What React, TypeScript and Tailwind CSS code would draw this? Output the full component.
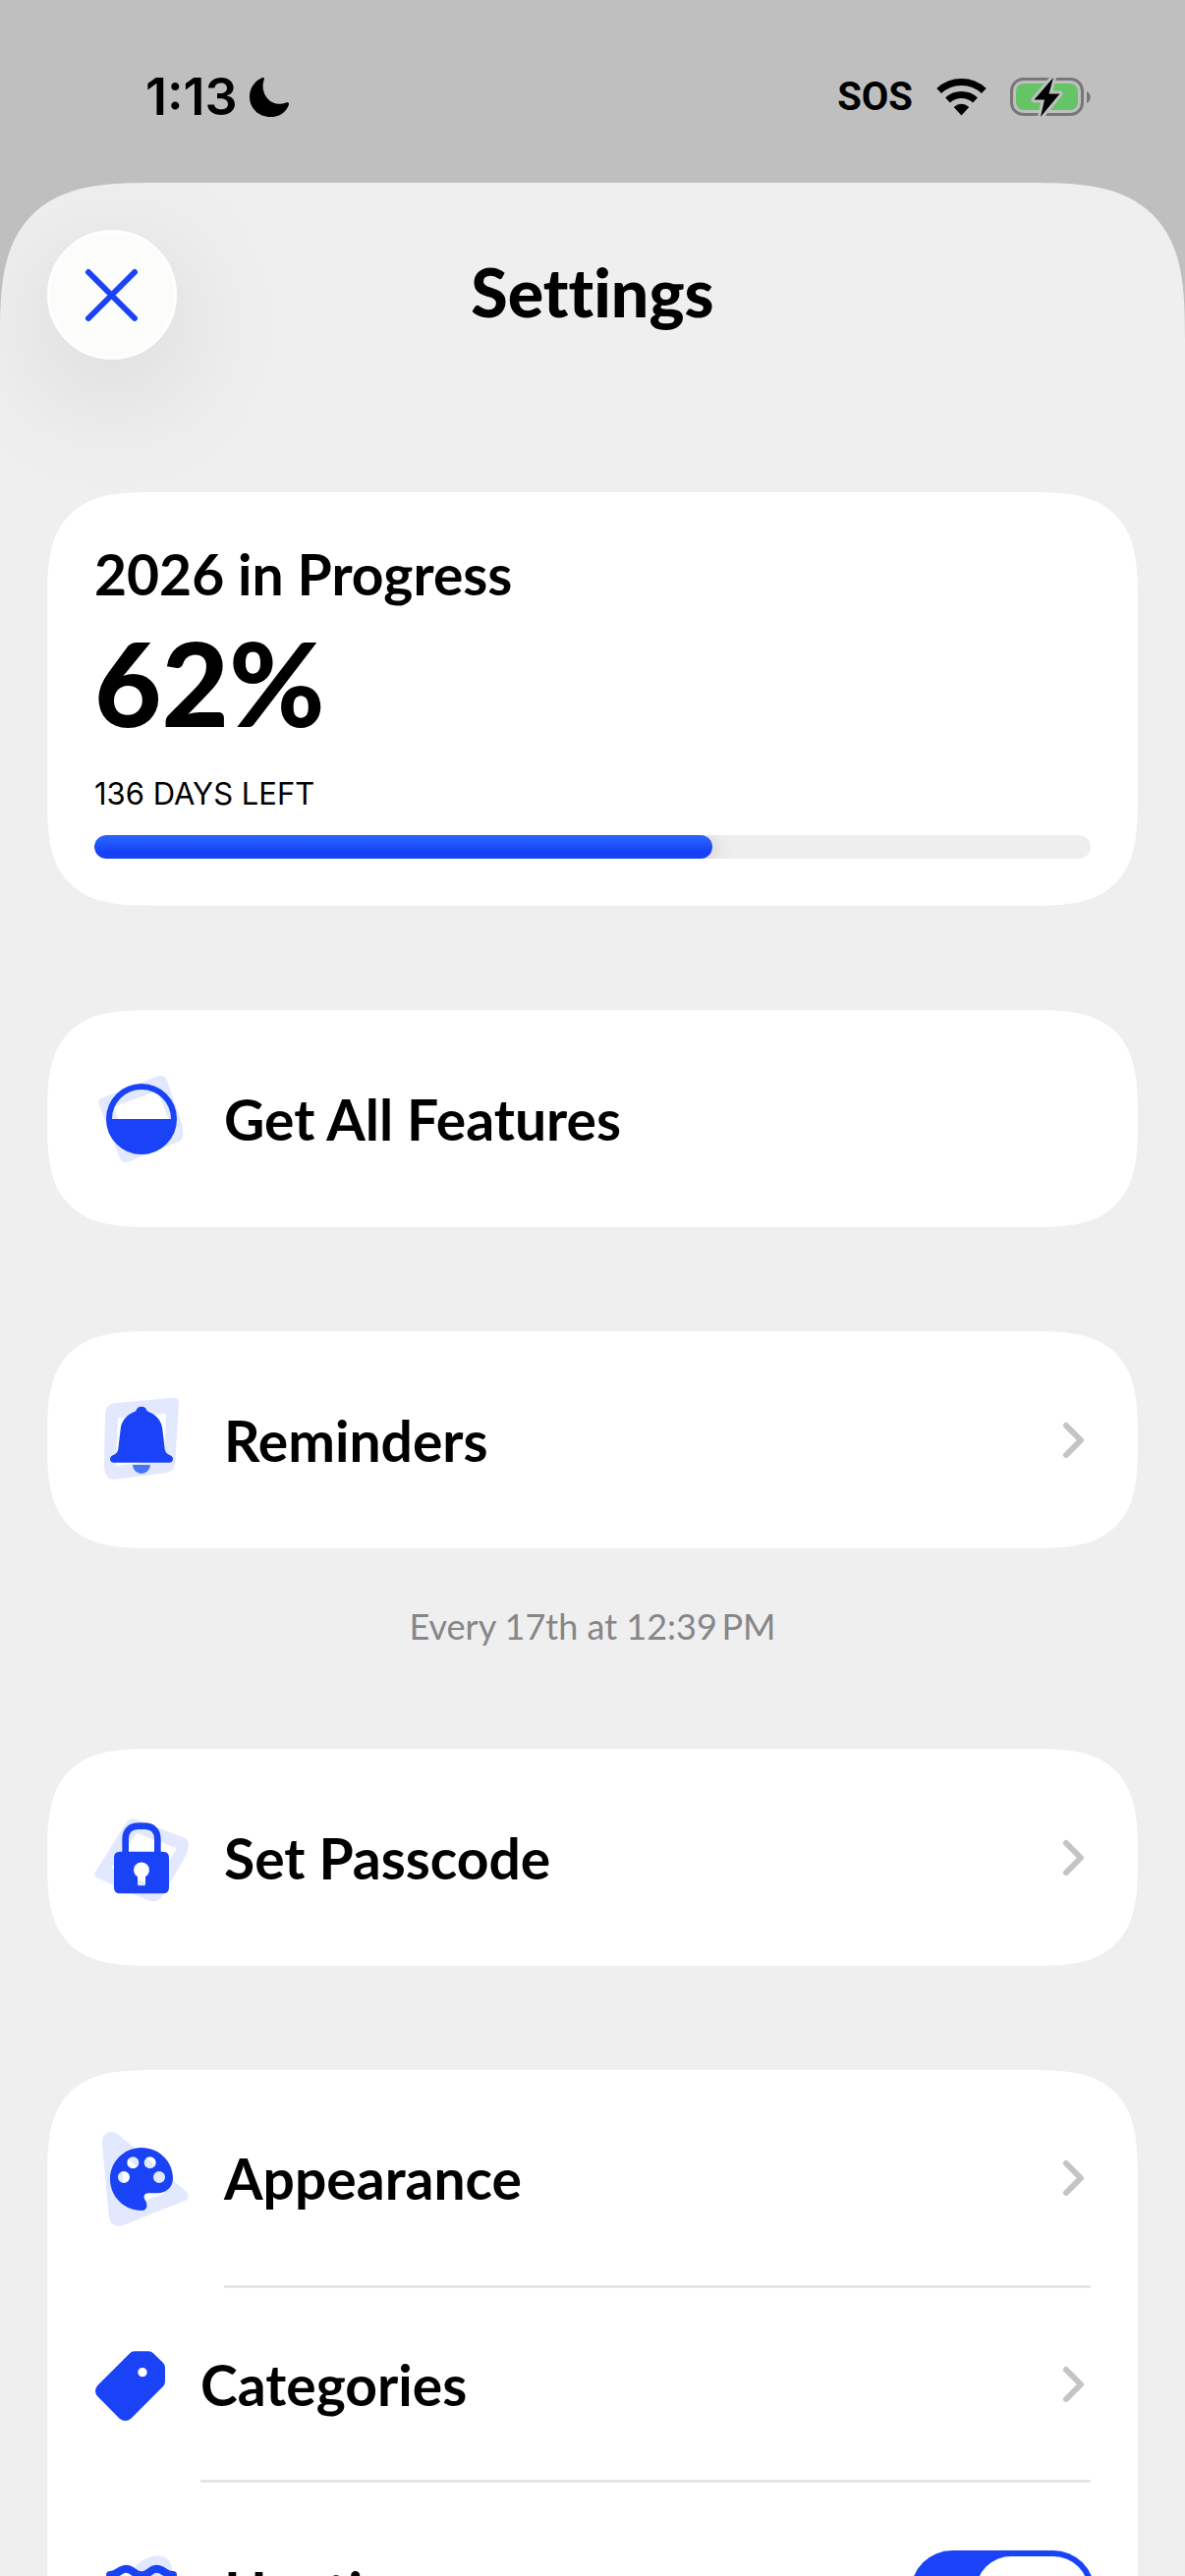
import { useState, type ReactNode } from 'react'

const YEAR_PROGRESS = 62

function MoonIcon() {
    return (
        <svg viewBox="0 0 40 40" className="size-10" aria-hidden="true">
            <path d="M14.6 2.5 C12.5 8 13.5 16 18 21 C22 26 30 28.5 37 25.6 C39.6 24.6 40.6 26 39.6 28.4 C36.5 36 29.5 40 21.3 40 C9 40 0 31 0 19.5 C0 11 5 3.8 12 .6 C14.5 -.5 15.5 .3 14.6 2.5Z" />
        </svg>
    )
}

function WifiIcon() {
    return (
        <svg viewBox="0 0 51 38" className="h-[38px] w-[51px]" aria-hidden="true">
            <path d="M2.7 12.5 A33.5 33.5 0 0 1 48.3 12.5 M11.5 22 A20.5 20.5 0 0 1 39.5 22" fill="none" stroke="black" strokeWidth="7" />
            <path d="M25.5 37.5 L17.7 29 Q25.5 22.5 33.3 29Z" />
        </svg>
    )
}

function BatteryIcon() {
    return (
        <svg viewBox="0 0 82 42" className="h-[42px] w-[82px]" aria-hidden="true">
            <rect x="1.5" y="2.5" width="72" height="36" rx="12" fill="none" stroke="#777777" strokeWidth="3" />
            <rect x="6" y="7" width="63" height="27" rx="8" fill="#65c466" />
            <path d="M78 15 C83 17 83 25 78 27Z" fill="#777777" />
            <path d="M44 1 L24.5 23.5 H35 L31 41 L50.5 17.5 H39.5Z" fill="black" stroke="#bfbfbf" strokeWidth="6" strokeLinejoin="round" paintOrder="stroke" />
        </svg>
    )
}

function FeaturesIcon() {
    return (
        <svg viewBox="48 60 288 288" className="size-24" aria-hidden="true">
            <path
                fillRule="evenodd"
                fill="#e2e8fd"
                d="M70 140 L242 73 Q262 66 270 86 L318 228 Q324 266 304 274 L150 335 Q134 340 126 324 L61 156 Q58 145 70 140Z M106 167 L242 118 L284 232 L150 280Z"
            />
            <circle cx="192" cy="204" r="99" fill="none" stroke="#1a43f8" strokeWidth="18" />
            <path d="M86 204 H298 A106 106 0 0 1 86 204Z" fill="#1a43f8" />
        </svg>
    )
}

function BellIcon() {
    return (
        <svg viewBox="48 52 288 288" className="size-24" aria-hidden="true">
            <path
                fillRule="evenodd"
                fill="#e2e8fd"
                d="M108 83 L292 66 Q306 65 306 80 L295 262 Q293 292 270 295 L108 315 Q80 315 78 275 L81 115 Q84 87 108 83Z M120 128 L267 114 L261 258 L113 274Z"
            />
            <path
                d="M192 93 C202 93 207 99 209 107 C236 117 254 137 256 162 L263 222 Q265 236 278 241 Q288 245 288 253 Q288 264 276 264 H108 Q96 264 96 253 Q96 245 106 241 Q119 236 121 222 L128 162 C130 137 148 117 175 107 C177 99 182 93 192 93Z"
                fill="#1a43f8"
            />
            <path d="M165 271 H219 A27 27 0 0 1 165 271Z" fill="#4b75f9" />
        </svg>
    )
}

function LockIcon() {
    return (
        <svg viewBox="48 38 288 288" className="size-24" aria-hidden="true">
            <path
                fillRule="evenodd"
                fill="#e2e8fd"
                d="M178 65 L325 122 Q340 130 334 156 Q330 174 320 188 L253 303 Q240 320 215 313 L55 243 Q44 236 52 224 L144 76 Q156 58 178 65Z M178 107 L300 153 L230 268 L99 213Z"
            />
            <path d="M143 168 V125 C143 98 160 85 182 85 H202 C224 85 241 98 241 125 V168" fill="none" stroke="#1a43f8" strokeWidth="20" />
            <path
                fillRule="evenodd"
                fill="#1a43f8"
                d="M126 163 H258 Q276 163 276 181 V273 Q276 291 258 291 H126 Q108 291 108 273 V181 Q108 163 126 163Z M180 240 V262 Q180 267 185 267 H199 Q204 267 204 262 V240 A24 24 0 1 0 180 240Z"
            />
        </svg>
    )
}

function PaletteIcon() {
    return (
        <svg viewBox="48 60 288 288" className="size-24" aria-hidden="true">
            <path
                fillRule="evenodd"
                fill="#e2e8fd"
                d="M72 96 C72 60 98 50 124 70 L322 236 Q346 256 326 269 L136 345 C110 353 94 338 92 314Z M130 122 L264 248 L140 292Z"
            />
            <path
                fillRule="evenodd"
                fill="#1a43f8"
                d="M192 108 C246 108 288 150 288 202 C288 228 268 247 240 247 H214 C201 247 196 257 203 268 C212 283 210 300 192 300 C139 300 96 257 96 204 C96 151 139 108 192 108Z M156 198 A18 18 0 1 0 120 198 A18 18 0 1 0 156 198Z M184 154 A18 18 0 1 0 148 154 A18 18 0 1 0 184 154Z M236 154 A18 18 0 1 0 200 154 A18 18 0 1 0 236 154Z M264 198 A18 18 0 1 0 228 198 A18 18 0 1 0 264 198Z"
            />
        </svg>
    )
}

function TagIcon() {
    return (
        <svg viewBox="48 62 216 216" className="size-18" aria-hidden="true">
            <path
                fillRule="evenodd"
                fill="#1a43f8"
                d="M170 66 H214 Q222 66 228 72 L258 101 Q264 107 264 115 V158 Q264 167 258 173 L160 271 Q143 285 125 271 L58 204 Q44 187 58 170 L155 73 Q162 66 170 66Z M209 130 A14 14 0 1 0 181 130 A14 14 0 1 0 209 130Z"
            />
        </svg>
    )
}

function WavesIcon() {
    return (
        <svg viewBox="168 268 288 288" className="size-24" aria-hidden="true">
            <path d="M290 338 C330 295 400 285 406 345 L390 480 C330 540 260 520 235 470Z" fill="#e2e8fd" />
            <g fill="none" stroke="#1a43f8" strokeWidth="24" strokeLinecap="round">
                <path d="M216 361 C240 361 245 342 265 342 C285 342 290 362 312 362 C334 362 339 342 358 342 C379 342 384 361 408 361" />
                <path d="M216 413 C240 413 245 394 265 394 C285 394 290 414 312 414 C334 414 339 394 358 394 C379 394 384 413 408 413" />
                <path d="M216 465 C240 465 245 446 265 446 C285 446 290 466 312 466 C334 466 339 446 358 446 C379 446 384 465 408 465" />
            </g>
        </svg>
    )
}

function Chevron() {
    return (
        <svg viewBox="0 0 36 48" className="h-12 w-9" fill="none" aria-hidden="true">
            <path d="M11 9 L26 24 L11 39" stroke="#c4c4c4" strokeWidth="6" strokeLinecap="round" strokeLinejoin="round" />
        </svg>
    )
}

function Card({ children }: { children: ReactNode }) {
    return (
        <section className="overflow-hidden rounded-[78px] bg-white [corner-shape:superellipse(1.6)] supports-[corner-shape:squircle]:rounded-[112px]">
            {children}
        </section>
    )
}

function LinkRow({ icon, label, chevron = true, className = 'h-[221px]' }: { icon: ReactNode; label: string; chevron?: boolean; className?: string }) {
    return (
        <button className="flex w-full items-center gap-9 px-12 text-left">
            {icon}
            <span className={`flex flex-1 items-center justify-between ${className}`}>
                <span className="text-[57px] leading-[70px] font-bold">{label}</span>
                {chevron && <Chevron />}
            </span>
        </button>
    )
}

export default function App() {
    const [haptics, setHaptics] = useState(true)

    return (
        <div className="flex h-screen flex-col overflow-hidden bg-[#bfbfbf] font-[Lato,sans-serif] text-black">
            <div className="flex h-[186px] shrink-0 items-center justify-between pt-3 pr-24 pl-[148px] font-[Inter,sans-serif]">
                <div className="flex items-center gap-3">
                    <span className="text-[52px] leading-[60px] font-semibold">1:13</span>
                    <MoonIcon />
                </div>
                <div className="flex items-center gap-6">
                    <span className="font-[Roboto,sans-serif] text-[40px] leading-[60px] font-bold">SOS</span>
                    <WifiIcon />
                    <BatteryIcon />
                </div>
            </div>

            <main className="min-h-0 flex-1 overflow-y-auto rounded-t-[112px] bg-[#efefef] px-12 [corner-shape:superellipse(1.6)] [scrollbar-width:none] supports-[corner-shape:squircle]:rounded-t-[160px]">
                <header className="grid grid-cols-[132px_1fr_132px] items-start pt-12">
                    <button
                        aria-label="Close"
                        className="flex size-[132px] items-center justify-center rounded-full border-3 border-white bg-[#fcfcfa] shadow-[0_30px_130px_rgba(0,0,0,0.13)]"
                    >
                        <svg viewBox="0 0 60 60" className="size-15" fill="none" aria-hidden="true">
                            <path d="M6 7 L53 54 M53 7 L6 54" stroke="#1a43f8" strokeWidth="6" strokeLinecap="round" />
                        </svg>
                    </button>
                    <h1 className="text-center text-[68px] leading-[126px] font-black [font-variant-ligatures:none]">Settings</h1>
                </header>

                <div className="mt-[135px] flex flex-col gap-[106px]">
                    <Card>
                        <div className="p-12">
                            <h2 className="text-[57px] leading-[70px] font-bold">2026 in Progress</h2>
                            <p className="text-[118px] leading-[151px] font-black">{YEAR_PROGRESS}%</p>
                            <p className="mt-3 font-[Inter,sans-serif] text-[31px] leading-[52px]">136 DAYS LEFT</p>
                            <div className="mt-4 h-6 overflow-hidden rounded-xl bg-[#eeeeee]">
                                <div
                                    className="h-full rounded-xl bg-linear-to-b from-[#2d66fb] to-[#1840f7] to-70% shadow-[0_6px_24px_rgba(0,0,0,0.2)]"
                                    style={{ width: `${YEAR_PROGRESS}%` }}
                                />
                            </div>
                        </div>
                    </Card>

                    <Card>
                        <LinkRow icon={<FeaturesIcon />} label="Get All Features" chevron={false} />
                    </Card>

                    <div>
                        <Card>
                            <LinkRow icon={<BellIcon />} label="Reminders" />
                        </Card>
                        <p className="mt-13 -mb-2 text-center text-[36px] leading-[54px] text-[#86868a]">Every 17th at 12:39{'\u2009'}PM</p>
                    </div>

                    <Card>
                        <LinkRow icon={<LockIcon />} label="Set Passcode" />
                    </Card>

                    <Card>
                        <LinkRow icon={<PaletteIcon />} label="Appearance" className="h-[222px] border-b-3 border-[#e6e6e6]" />
                        <LinkRow icon={<TagIcon />} label="Categories" className="h-[198px] border-b-3 border-[#e6e6e6]" />
                        <label className="flex h-[221px] items-center gap-9 pr-11 pl-12">
                            <WavesIcon />
                            <span className="flex-1 text-[57px] leading-[70px] font-bold">Haptics</span>
                            <input
                                type="checkbox"
                                role="switch"
                                checked={haptics}
                                onChange={(e) => setHaptics(e.target.checked)}
                                className="flex h-[84px] w-[187px] appearance-none items-center rounded-full bg-gray-300 p-[6px] before:h-[72px] before:w-[115px] before:rounded-full before:bg-white checked:justify-end checked:bg-[#1a43f8]"
                            />
                        </label>
                    </Card>
                </div>
            </main>
        </div>
    )
}
